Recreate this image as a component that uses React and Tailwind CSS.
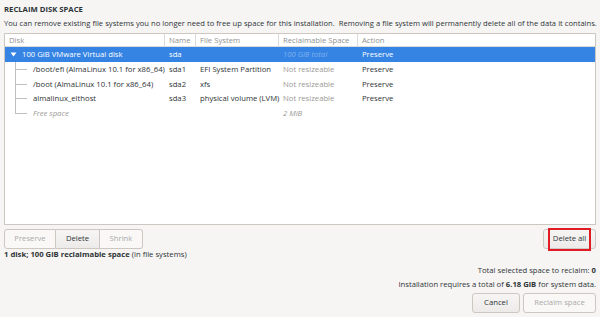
import React from "react";

const cols = "grid grid-cols-[160px_31px_83px_79px_1fr]";

function TreeLine({ last }) {
    return (
        <span className="relative w-[24px] h-full shrink-0">
            <span className={`absolute left-[6px] top-0 w-px bg-[#c0bfbc] ${last ? "h-1/2" : "h-full"}`} />
            <span className="absolute left-[6px] top-1/2 w-[12px] h-px bg-[#c0bfbc]" />
        </span>
    );
}

const rows = [
    { disk: "/boot/efi (AlmaLinux 10.1 for x86_64)", name: "sda1", fs: "EFI System Partition", space: "Not resizeable", action: "Preserve" },
    { disk: "/boot (AlmaLinux 10.1 for x86_64)", name: "sda2", fs: "xfs", space: "Not resizeable", action: "Preserve" },
    { disk: "almalinux_elthost", name: "sda3", fs: "physical volume (LVM)", space: "Not resizeable", action: "Preserve" },
];

function Btn({ children, disabled, className = "" }) {
    return (
        <button
            className={`h-[20px] rounded-[3px] border border-[#cdc7c2] text-[7.7px] ${disabled ? "text-[#a9a9a9] bg-[#f9f8f7]" : "text-[#2e3436] bg-gradient-to-b from-[#f6f5f4] to-[#edebe9]"} ${className}`}
        >
            {children}
        </button>
    );
}

export default function App() {
    return (
        <div className="w-[600px] h-[317px] bg-[#f6f5f4] text-[#2e3436] flex flex-col px-[4px] pb-[4px] font-['Open_Sans',sans-serif] text-[7.7px] overflow-hidden">
            <div className="font-bold mt-[4px] h-[11px] leading-[11px]">RECLAIM DISK SPACE</div>
            <div className="mt-[3px] h-[11px] leading-[11px] whitespace-nowrap text-[7.6px] [word-spacing:0.1px]">
                You can remove existing file systems you no longer need to free up space for this installation.&nbsp; Removing a file system will permanently delete all of the data it contains.
            </div>

            {/* Table */}
            <div className="mt-[4px] flex-1 bg-white border border-[#cdc7c2] flex flex-col">
                <div className={`${cols} h-[13px] text-[#919191] border-b border-[#dedcda]`}>
                    <div className="px-[4px] leading-[13px] border-r border-[#dedcda]">Disk</div>
                    <div className="px-[4px] leading-[13px] border-r border-[#dedcda]">Name</div>
                    <div className="px-[4px] leading-[13px] border-r border-[#dedcda]">File System</div>
                    <div className="px-[4px] leading-[13px] border-r border-[#dedcda]">Reclaimable Space</div>
                    <div className="px-[4px] leading-[13px]">Action</div>
                </div>

                <div className={`${cols} h-[15px] bg-[#3584e4] text-white leading-[15px]`}>
                    <div className="flex items-center pl-[5px] whitespace-nowrap">
                        <svg width="7" height="5" viewBox="0 0 7 5" className="mr-[5px]">
                            <path d="M0.5 0.5 L6.5 0.5 L3.5 4.5 Z" fill="white" />
                        </svg>
                        100 GiB VMware Virtual disk
                    </div>
                    <div className="px-[4px]">sda</div>
                    <div className="px-[4px]" />
                    <div className="px-[4px] italic text-[#7fb0ee]">100 GiB total</div>
                    <div className="px-[4px]">Preserve</div>
                </div>

                {rows.map((r) => (
                    <div key={r.name} className={`${cols} h-[14.5px] leading-[14.5px]`}>
                        <div className="flex h-full pl-[4px] whitespace-nowrap">
                            <TreeLine />
                            <span>{r.disk}</span>
                        </div>
                        <div className="px-[4px]">{r.name}</div>
                        <div className="px-[4px] whitespace-nowrap">{r.fs}</div>
                        <div className="px-[4px] text-[#9a9996] whitespace-nowrap">{r.space}</div>
                        <div className="px-[4px]">{r.action}</div>
                    </div>
                ))}

                <div className={`${cols} h-[14.5px] leading-[14.5px] italic text-[#9a9996]`}>
                    <div className="flex h-full pl-[4px]">
                        <TreeLine last />
                        <span>Free space</span>
                    </div>
                    <div />
                    <div />
                    <div className="px-[4px]">2 MiB</div>
                    <div />
                </div>
            </div>

            <div className="flex items-center justify-between mt-[4px]">
                <div className="flex">
                    <Btn disabled className="w-[52px] rounded-r-none">Preserve</Btn>
                    <Btn className="w-[44px] rounded-none border-l-0">Delete</Btn>
                    <Btn disabled className="w-[43px] rounded-l-none border-l-0">Shrink</Btn>
                </div>
                <div className="relative">
                    <Btn className="w-[53px]">Delete all</Btn>
                    <span className="absolute left-[5px] top-[-1px] w-[43px] h-[23px] border-2 border-[#e01b24] pointer-events-none" />
                </div>
            </div>

            <div className="h-[11px] leading-[11px]">
                <span className="font-bold">1 disk; 100 GiB reclaimable space</span> (in file systems)
            </div>

            <div className="text-right h-[11px] leading-[11px] mt-[5px]">
                Total selected space to reclaim: <span className="font-bold">0</span>
            </div>
            <div className="text-right h-[11px] leading-[11px] mt-[3px]">
                Installation requires a total of <span className="font-bold">6.18 GiB</span> for system data.
            </div>

            <div className="flex justify-end gap-[3px] mt-[3px]">
                <Btn className="w-[48px]">Cancel</Btn>
                <Btn disabled className="w-[73px]">Reclaim space</Btn>
            </div>
        </div>
    );
}
